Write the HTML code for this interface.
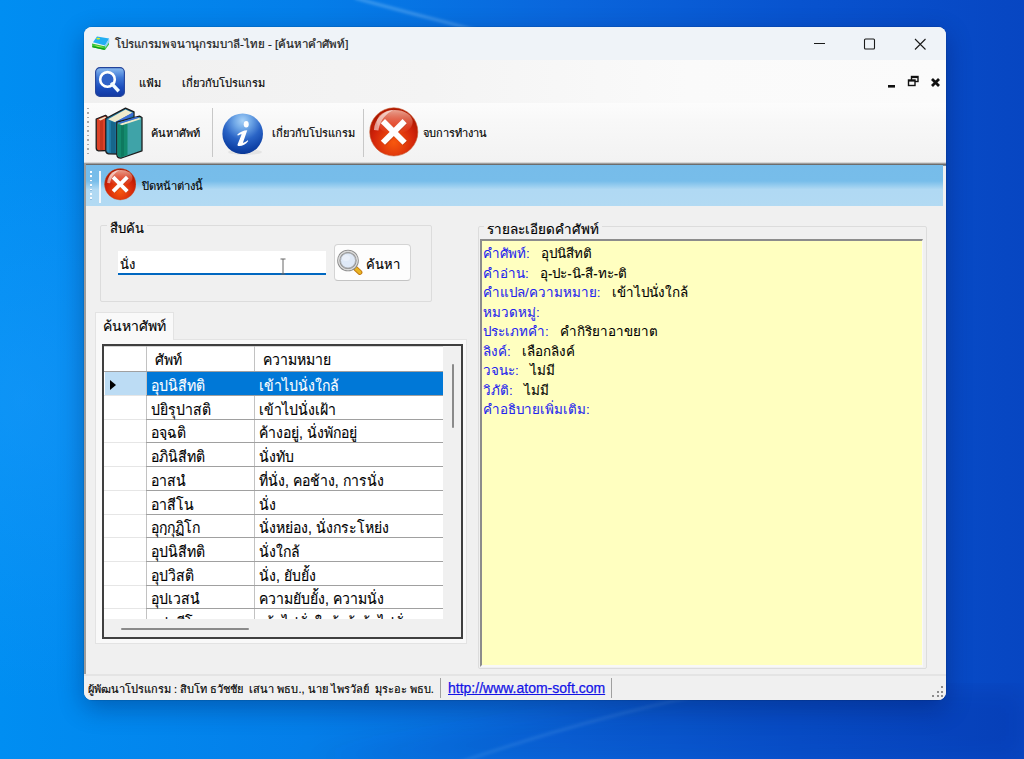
<!DOCTYPE html>
<html><head><meta charset="utf-8">
<style>
*{margin:0;padding:0;box-sizing:border-box}
html,body{width:1024px;height:759px;overflow:hidden}
body{position:relative;font-family:"Liberation Sans",sans-serif;color:#000;
 background:radial-gradient(ellipse 260px 300px at 20px 400px,rgba(40,160,255,.35),rgba(40,160,255,0)),
 linear-gradient(90deg,#008ef2 0%,#047ee9 30%,#0a66dc 55%,#0853cf 78%,#0746c2 100%);}
.a{position:absolute;white-space:nowrap}
.gt{font-size:14px;line-height:19px;transform:translateY(3.5px) scaleY(1.07);transform-origin:0 100%;-webkit-text-stroke:0.1px currentColor}
.dt{font-size:13.4px;line-height:19px;-webkit-text-stroke:0.08px currentColor}
#win{position:absolute;left:84px;top:27px;width:862px;height:673px;border-radius:8px;overflow:hidden;background:#f0f0f0;box-shadow:0 0 0 0.5px rgba(0,0,0,.15),0 8px 26px rgba(0,10,60,.32)}
</style></head><body>
<svg class="a" style="left:0;top:0" width="1024" height="759">
  <defs><filter id="bl" x="-20%" y="-20%" width="140%" height="140%"><feGaussianBlur stdDeviation="1.5"/></filter><filter id="bl2"><feGaussianBlur stdDeviation="12"/></filter></defs>
  <path d="M355,-2 C390,8 430,18 475,30" stroke="rgba(190,230,255,.35)" stroke-width="2.5" fill="none" filter="url(#bl)"/>
  <path d="M300,759 C420,740 560,715 720,690 L1024,690 L1024,759Z" fill="rgba(0,20,90,.10)" filter="url(#bl2)"/>
  <path d="M460,762 C540,735 620,712 700,695" stroke="rgba(170,220,255,.12)" stroke-width="3" fill="none" filter="url(#bl)"/>
</svg>
<div id="win">
  <!-- title bar -->
  <div class="a" style="left:0;top:0;width:862px;height:33px;background:#eff3f8"></div>
  <div class="a" style="left:31px;top:8px;font-size:11.5px;color:#1b1b1b;-webkit-text-stroke:0.2px #1b1b1b">โปรแกรมพจนานุกรมบาลี-ไทย - [ค้นหาคำศัพท์]</div>

  <!-- title icon -->
  <svg class="a" style="left:8px;top:9px" width="18" height="15" viewBox="0 0 18 15">
    <polygon points="0,7.5 12.5,10.2 17,6 17,8.5 13,14 0.3,11.2" fill="#38c43a"/>
    <polygon points="0.5,10 12.5,12.5 12.8,14 0.3,11.2" fill="#0aa018"/>
    <polygon points="1.5,9 9,10.5 12,11.5 6,11" fill="#c8f050" opacity=".8"/>
    <polygon points="1,6.3 5,0.6 17.2,2.6 13,9.6" fill="#22aef2"/>
    <polygon points="13,9.6 17.2,2.6 17.4,6 13.2,12" fill="#8fd0f8"/>
    <ellipse cx="6.2" cy="2.6" rx="1.9" ry="0.9" fill="#e4ee1c"/>
  </svg>
  <!-- caption buttons -->
  <svg class="a" style="left:720px;top:6px" width="140" height="22">
    <line x1="10" y1="10.5" x2="21" y2="10.5" stroke="#1a1a1a" stroke-width="1.1"/>
    <rect x="60.5" y="6" width="10" height="10" rx="1" fill="none" stroke="#1a1a1a" stroke-width="1.1"/>
    <path d="M111 6L121.5 16.5M121.5 6L111 16.5" stroke="#1a1a1a" stroke-width="1.1"/>
  </svg>
  <!-- menu bar -->
  <div class="a" style="left:0;top:33px;width:862px;height:43px;background:linear-gradient(90deg,#f0f0f0,#f4f4f4 40%,#fafafa 70%,#fbfbfb)"></div>
  <!-- MDI buttons -->
  <svg class="a" style="left:800px;top:46.5px" width="60" height="16">
    <rect x="4" y="11" width="7" height="2.6" fill="#111"/>
    <rect x="27.5" y="2.5" width="6.5" height="5" fill="none" stroke="#111" stroke-width="1.4"/>
    <rect x="24.5" y="6" width="6.5" height="5.5" fill="#fafafa" stroke="#111" stroke-width="1.4"/>
    <rect x="24.5" y="6" width="6.5" height="1.6" fill="#111"/>
    <rect x="27.5" y="2.5" width="6.5" height="1.6" fill="#111"/>
    <path d="M48 5L55 12M55 5L48 12" stroke="#111" stroke-width="2.8"/>
  </svg>
  <!-- search icon (menu) -->
  <svg class="a" style="left:10.5px;top:40px" width="30" height="30" viewBox="0 0 30 30">
    <defs><linearGradient id="sq" x1="0" y1="0" x2="0" y2="1"><stop offset="0" stop-color="#8cbcf0"/><stop offset=".35" stop-color="#3f78d6"/><stop offset=".7" stop-color="#1a4cbc"/><stop offset="1" stop-color="#1238a2"/></linearGradient></defs>
    <rect x="0.6" y="0.6" width="28.8" height="28.8" rx="4.5" fill="url(#sq)" stroke="#23439a" stroke-width="1.1"/>
    <circle cx="12.5" cy="12.4" r="7.3" fill="#2f62c8" stroke="#fff" stroke-width="2.6"/>
    <line x1="17.2" y1="17.2" x2="22.6" y2="23" stroke="#f0fbff" stroke-width="3.4" stroke-linecap="square"/>
  </svg>
  <div class="a" style="left:55px;top:47px;font-size:11px;-webkit-text-stroke:0.15px #000">แฟ้ม</div>
  <div class="a" style="left:98px;top:47px;font-size:11px;-webkit-text-stroke:0.15px #000">เกี่ยวกับโปรแกรม</div>
  <!-- toolbar -->
  <div class="a" style="left:0;top:76px;width:862px;height:60px;background:linear-gradient(#fcfcfc,#f8f8f8 30%,#f2f2f2)"></div>
  <div class="a" style="left:0;top:135px;width:862px;height:4px;background:linear-gradient(#f2f2f2,#b0b0b0 30%,#6c6c6c 60%,#707070 80%,#8fb8d8)"></div>
  <!-- toolbar grip -->
  <div class="a" style="left:3px;top:81px;width:2px;height:47px;background:repeating-linear-gradient(#a8a8a8 0 1.5px,transparent 1.5px 4.5px)"></div>
  <!-- books icon -->
  <svg class="a" style="left:6px;top:77px" width="60" height="58" viewBox="0 0 60 58">
    <path d="M6.2,15 L15.5,11.3 L17,12.5 L17,46.5 L8.5,46.8 Q6.2,46.5 6.2,44 Z" fill="#dc4228" stroke="#1c1c1c" stroke-width="1.3" stroke-linejoin="round"/>
    <path d="M8.5,15.5 L14.8,12.8 L16.5,13.6 L10.5,16.6 Z" fill="#efe9cc"/>
    <path d="M10,17 L13,16 L13,46.3 L10,46.4 Z" fill="#a82814" opacity=".45"/>
    <path d="M15.8,14.5 L35.5,4.2 L44,7.8 L44,40 L28,50 L18.5,49.8 Q15.8,49.3 15.8,46.5 Z" fill="#1f7aa4" stroke="#1c1c1c" stroke-width="1.3" stroke-linejoin="round"/>
    <path d="M18,15.2 L35.5,5.6 L42.5,8.8 L25,18.2 Z" fill="#efeacc"/>
    <path d="M25,18.2 L42.5,8.8 L43.3,9.6 L43.3,11.2 L27,20 Z" fill="#3d6dd8"/>
    <path d="M21,17.5 L25.5,18.6 L25.5,49.3 L21,49.3 Z" fill="#0f5676" opacity=".55"/>
    <path d="M16.6,16 L19.2,16.6 L19.2,48.3 L16.6,47.3 Z" fill="#46a8d0" opacity=".45"/>
    <path d="M26.8,18.2 L49.5,12.2 L52,13.5 L52,46.8 L31.5,54 Q27,54.5 26.8,50.5 Z" fill="#3fa3a8" stroke="#1c1c1c" stroke-width="1.3" stroke-linejoin="round"/>
    <path d="M27.5,20.5 L37.5,18 L37.5,51 L31.5,53.2 Q27.8,53.5 27.5,50.5 Z" fill="#138a6d"/>
    <path d="M31,20 L34,19.2 L34,52.2 L31,53 Z" fill="#0c6e56" opacity=".6"/>
    <path d="M29.2,20 L48.8,14 L51.2,15 L32,21.3 Z" fill="#efeacc"/>
    <path d="M27.6,19 L46.5,12.8 L49.5,13.4 L29.5,19.8 Z" fill="#3b68d4"/>
  </svg>
  <!-- info icon -->
  <div class="a" style="left:144px;top:122px;width:34px;height:6px;border-radius:50%;background:rgba(0,0,0,.06)"></div>
  <svg class="a" style="left:138.4px;top:85.8px" width="41.4" height="41.6" viewBox="0 0 100 100">
    <defs><radialGradient id="ig" cx="50%" cy="18%" r="85%"><stop offset="0" stop-color="#a8d2f8"/><stop offset=".25" stop-color="#6ea6e6"/><stop offset=".55" stop-color="#2a64c6"/><stop offset=".85" stop-color="#0f42a6"/><stop offset="1" stop-color="#0a3590"/></radialGradient></defs>
    <circle cx="50" cy="50" r="49" fill="url(#ig)"/>
    <ellipse cx="58.5" cy="27" rx="6" ry="7.8" fill="#fff"/>
    <path d="M37,52 C44,45 52,42 61,41.5 L50.5,72 C54,71 58,69 62,65.5 L63.5,67.5 C57,76 48,80.5 39.5,79.5 C37.5,79 37,77.5 37.8,75.5 L47.5,51 C44.5,51 41.5,52.5 38.5,54.5 Z" fill="#fff"/>
  </svg>
  
  <!-- big red X -->
  <svg class="a" style="left:285px;top:79.8px" width="49.6" height="49.8" viewBox="0 0 100 100">
    <defs>
      <radialGradient id="rg" cx="50%" cy="72%" r="62%"><stop offset="0" stop-color="#f7580e"/><stop offset=".35" stop-color="#e6400c"/><stop offset=".7" stop-color="#d2240a"/><stop offset="1" stop-color="#b01800"/></radialGradient>
      <linearGradient id="hl" x1="0" y1="0" x2="0" y2="1"><stop offset="0" stop-color="#ffd0c0" stop-opacity=".75"/><stop offset=".6" stop-color="#ff9a80" stop-opacity=".35"/><stop offset="1" stop-color="#ff8060" stop-opacity="0"/></linearGradient>
    </defs>
    <circle cx="50" cy="50" r="48.5" fill="url(#rg)" stroke="#c85a30" stroke-width="1.2"/>
    <ellipse cx="52" cy="30" rx="36" ry="24" fill="url(#hl)"/>
    <path d="M10,46 C11,25 28,7 50,5.5 C36,12 22,26 19,47 Z" fill="#fff" opacity=".55"/>
    <g transform="rotate(45 50 50)"><g transform="translate(1.6,0)" fill="#8a2a10" opacity=".35"><rect x="44" y="19" width="12" height="62"/><rect x="19" y="44" width="62" height="12"/></g><rect x="44" y="19" width="12" height="62" fill="#fff"/><rect x="19" y="44" width="62" height="12" fill="#fff"/></g>
  </svg>
  <div class="a" style="left:67px;top:97px;font-size:11px;-webkit-text-stroke:0.15px #000">ค้นหาศัพท์</div>
  <div class="a" style="left:128px;top:81px;width:1px;height:49px;background:#c8c8c8"></div>
  <div class="a" style="left:188px;top:97px;font-size:11px;-webkit-text-stroke:0.15px #000">เกี่ยวกับโปรแกรม</div>
  <div class="a" style="left:279px;top:82px;width:1px;height:48px;background:#c8c8c8"></div>
  <div class="a" style="left:339px;top:97px;font-size:11px;-webkit-text-stroke:0.15px #000">จบการทำงาน</div>
  <!-- MDI client border -->
  <div class="a" style="left:0;top:137px;width:1.8px;height:510px;background:#9c9c9c"></div>
  <!-- blue bar -->
  <div class="a" style="left:1.6px;top:138px;width:857.4px;height:41px;background:linear-gradient(#76bcea 0px,#77bdea 16px,#b0d9f3 24.5px,#b2daf3 100%)"></div>

  <div class="a" style="left:6px;top:143.5px;width:2px;height:31px;background:repeating-linear-gradient(#f6fbff 0 1.5px,#8fbde0 1.5px 2.4px,transparent 2.4px 4.4px)"></div>
  <div class="a" style="left:15.3px;top:144px;width:2px;height:31.5px;background:#f4f9fd"></div>
  <svg class="a" style="left:20.1px;top:141px" width="32.4" height="32.5" viewBox="0 0 100 100">
    <circle cx="50" cy="50" r="48.5" fill="url(#rg)" stroke="#c85a30" stroke-width="1.2"/>
    <ellipse cx="52" cy="30" rx="36" ry="24" fill="url(#hl)"/>
    <path d="M10,46 C11,25 28,7 50,5.5 C36,12 22,26 19,47 Z" fill="#fff" opacity=".55"/>
    <g transform="rotate(45 50 50)"><g transform="translate(1.6,0)" fill="#8a2a10" opacity=".35"><rect x="44" y="19" width="12" height="62"/><rect x="19" y="44" width="62" height="12"/></g><rect x="44" y="19" width="12" height="62" fill="#fff"/><rect x="19" y="44" width="62" height="12" fill="#fff"/></g>
  </svg>
  <div class="a" style="left:57.8px;top:150px;font-size:11.2px;-webkit-text-stroke:0.12px #000">ปิดหน้าต่างนี้</div>

  <!-- group box search -->
  <div class="a" style="left:16px;top:198px;width:332px;height:77px;border:1px solid #dcdcdc;border-radius:2px"></div>
  <div class="a" style="left:23px;top:191px;padding:0 3px;background:#f0f0f0;font-size:13px;-webkit-text-stroke:0.15px #000">สืบค้น</div>
  <div class="a" style="left:34px;top:224px;width:208px;height:24px;background:#fff;border-bottom:2px solid #0067c0"></div>
  <div class="a" style="left:36px;top:227px;font-size:13px;-webkit-text-stroke:0.15px #000">นั่ง</div>
  <div class="a" style="left:250px;top:217px;width:77px;height:37px;background:#fdfdfd;border:1px solid #d4d4d4;border-bottom-color:#c4c4c4;border-radius:4px"></div>

  <svg class="a" style="left:250px;top:219px" width="30" height="30" viewBox="0 0 30 30">
    <line x1="22" y1="22.8" x2="25.8" y2="26.3" stroke="#c47a10" stroke-width="5.2" stroke-linecap="round"/>
    <line x1="22" y1="22.8" x2="25.8" y2="26.3" stroke="#e8b424" stroke-width="3.2" stroke-linecap="round"/>
    <circle cx="14" cy="14.5" r="9.3" fill="#dfe9f7" stroke="#888" stroke-width="3"/>
    <circle cx="14" cy="14.5" r="9.3" fill="none" stroke="#dadada" stroke-width="1.5"/>
    <circle cx="14" cy="14.5" r="7.5" fill="none" stroke="#9a9a9a" stroke-width=".7"/>
    <ellipse cx="12" cy="12" rx="4" ry="3" fill="#fff" opacity=".35"/>
  </svg>
  <div class="a" style="left:282px;top:227px;font-size:13px;-webkit-text-stroke:0.15px #000">ค้นหา</div>
  <!-- tab -->
  <div class="a" style="left:11px;top:312px;width:372px;height:305px;background:#f9f9f9;border:1px solid #e3e3e3"></div>
  <div class="a" style="left:11px;top:285px;width:79px;height:28px;background:#f9f9f9;border:1px solid #e3e3e3;border-bottom:none"></div>
  <div class="a" style="left:19px;top:287.5px;font-size:14px;-webkit-text-stroke:0.12px #000">ค้นหาศัพท์</div>
  <div class="a" style="left:18px;top:317px;width:361px;height:295px;border:2px solid #3f3f3f;background:#fff;overflow:hidden">
<div class="a" style="left:0;top:0;width:339px;height:25px;background:#fff;border-top:1px solid #d4d4d4"></div>
<div class="a" style="left:42px;top:0;width:1px;height:273px;background:#c2c2c2"></div>
<div class="a" style="left:150px;top:0;width:1px;height:273px;background:#c2c2c2"></div>
<div class="a" style="left:0;top:25px;width:339px;height:1px;background:#a0a0a0"></div>
<div class="a gt" style="left:51px;top:2px">ศัพท์</div>
<div class="a gt" style="left:159px;top:2px">ความหมาย</div>
<div class="a" style="left:1px;top:26.0px;width:41px;height:23px;background:#bcdcf4"></div>
<div class="a" style="left:43px;top:26.0px;width:296px;height:23px;background:#0078d7"></div>
<svg class="a" style="left:6px;top:34.0px" width="7" height="10"><path d="M0 0L6 5L0 10Z" fill="#000"/></svg>
<div class="a" style="left:0;top:49.0px;width:42px;height:1px;background:#e6e6e6"></div>
<div class="a" style="left:42px;top:49.0px;width:297px;height:1px;background:#a0a0a0"></div>
<div class="a gt" style="left:47px;top:28.0px;color:#fff">อุปนิสีทติ</div>
<div class="a gt" style="left:155px;top:28.0px;color:#fff">เข้าไปนั่งใกล้</div>
<div class="a" style="left:0;top:72.7px;width:42px;height:1px;background:#e6e6e6"></div>
<div class="a" style="left:42px;top:72.7px;width:297px;height:1px;background:#a0a0a0"></div>
<div class="a gt" style="left:47px;top:51.7px;color:#000">ปยิรุปาสติ</div>
<div class="a gt" style="left:155px;top:51.7px;color:#000">เข้าไปนั่งเฝ้า</div>
<div class="a" style="left:0;top:96.4px;width:42px;height:1px;background:#e6e6e6"></div>
<div class="a" style="left:42px;top:96.4px;width:297px;height:1px;background:#a0a0a0"></div>
<div class="a gt" style="left:47px;top:75.4px;color:#000">อจฺฉติ</div>
<div class="a gt" style="left:155px;top:75.4px;color:#000">ค้างอยู่, นั่งพักอยู่</div>
<div class="a" style="left:0;top:120.1px;width:42px;height:1px;background:#e6e6e6"></div>
<div class="a" style="left:42px;top:120.1px;width:297px;height:1px;background:#a0a0a0"></div>
<div class="a gt" style="left:47px;top:99.1px;color:#000">อภินิสีทติ</div>
<div class="a gt" style="left:155px;top:99.1px;color:#000">นั่งทับ</div>
<div class="a" style="left:0;top:143.8px;width:42px;height:1px;background:#e6e6e6"></div>
<div class="a" style="left:42px;top:143.8px;width:297px;height:1px;background:#a0a0a0"></div>
<div class="a gt" style="left:47px;top:122.8px;color:#000">อาสนํ</div>
<div class="a gt" style="left:155px;top:122.8px;color:#000">ที่นั่ง, คอช้าง, การนั่ง</div>
<div class="a" style="left:0;top:167.5px;width:42px;height:1px;background:#e6e6e6"></div>
<div class="a" style="left:42px;top:167.5px;width:297px;height:1px;background:#a0a0a0"></div>
<div class="a gt" style="left:47px;top:146.5px;color:#000">อาสีโน</div>
<div class="a gt" style="left:155px;top:146.5px;color:#000">นั่ง</div>
<div class="a" style="left:0;top:191.2px;width:42px;height:1px;background:#e6e6e6"></div>
<div class="a" style="left:42px;top:191.2px;width:297px;height:1px;background:#a0a0a0"></div>
<div class="a gt" style="left:47px;top:170.2px;color:#000">อุกฺกุฏิโก</div>
<div class="a gt" style="left:155px;top:170.2px;color:#000">นั่งหย่อง, นั่งกระโหย่ง</div>
<div class="a" style="left:0;top:214.9px;width:42px;height:1px;background:#e6e6e6"></div>
<div class="a" style="left:42px;top:214.9px;width:297px;height:1px;background:#a0a0a0"></div>
<div class="a gt" style="left:47px;top:193.9px;color:#000">อุปนิสีทติ</div>
<div class="a gt" style="left:155px;top:193.9px;color:#000">นั่งใกล้</div>
<div class="a" style="left:0;top:238.6px;width:42px;height:1px;background:#e6e6e6"></div>
<div class="a" style="left:42px;top:238.6px;width:297px;height:1px;background:#a0a0a0"></div>
<div class="a gt" style="left:47px;top:217.6px;color:#000">อุปวิสติ</div>
<div class="a gt" style="left:155px;top:217.6px;color:#000">นั่ง, ยับยั้ง</div>
<div class="a" style="left:0;top:262.3px;width:42px;height:1px;background:#e6e6e6"></div>
<div class="a" style="left:42px;top:262.3px;width:297px;height:1px;background:#a0a0a0"></div>
<div class="a gt" style="left:47px;top:241.3px;color:#000">อุปเวสนํ</div>
<div class="a gt" style="left:155px;top:241.3px;color:#000">ความยับยั้ง, ความนั่ง</div>
<div class="a" style="left:0;top:286.0px;width:42px;height:1px;background:#e6e6e6"></div>
<div class="a" style="left:42px;top:286.0px;width:297px;height:1px;background:#a0a0a0"></div>
<div class="a gt" style="left:47px;top:265.0px;color:#000">อุปาสีโน</div>
<div class="a gt" style="left:155px;top:265.0px;color:#000">เข้าไปนั่งใกล้, ผู้เข้าไปนั่ง</div>
<div class="a" style="left:0;top:273px;width:359px;height:19px;background:#f0f0f0"></div>
<div class="a" style="left:17px;top:282px;width:128px;height:2px;background:#8a8a8a;border-radius:1px"></div>
<div class="a" style="left:339px;top:0;width:20px;height:273px;background:#f0f0f0"></div>
<div class="a" style="left:348px;top:18px;width:2px;height:64px;background:#8a8a8a;border-radius:1px"></div>
</div>
  <!-- details group -->
  <div class="a" style="left:394px;top:199px;width:449px;height:443px;border:1px solid #dcdcdc;border-radius:2px"></div>
  <div class="a" style="left:400px;top:191px;padding:0 3px;background:#f0f0f0;font-size:13.5px;-webkit-text-stroke:0.15px #000">รายละเอียดคำศัพท์</div>
  <div class="a" style="left:396px;top:212px;width:443px;height:428px;background:#ffffc0;border-style:solid;border-width:2px 1px 2px 2px;border-color:#8c8c8c #f8f8f8 #f8f8f8 #8c8c8c;overflow:hidden">
  <div class="a dt" style="left:1px;top:3.0px"><span style="color:#2424ee">คำศัพท์:</span>&nbsp;&nbsp; อุปนิสีทติ</div><div class="a dt" style="left:1px;top:22.5px"><span style="color:#2424ee">คำอ่าน:</span>&nbsp;&nbsp; อุ-ปะ-นิ-สี-ทะ-ติ</div><div class="a dt" style="left:1px;top:42.0px"><span style="color:#2424ee">คำแปล/ความหมาย:</span>&nbsp;&nbsp; เข้าไปนั่งใกล้</div><div class="a dt" style="left:1px;top:61.5px"><span style="color:#2424ee">หมวดหมู่:</span>&nbsp;&nbsp; </div><div class="a dt" style="left:1px;top:81.0px"><span style="color:#2424ee">ประเภทคำ:</span>&nbsp;&nbsp; คำกิริยาอาขยาต</div><div class="a dt" style="left:1px;top:100.5px"><span style="color:#2424ee">ลิงค์:</span>&nbsp;&nbsp; เลือกลิงค์</div><div class="a dt" style="left:1px;top:120.0px"><span style="color:#2424ee">วจนะ:</span>&nbsp;&nbsp; ไม่มี</div><div class="a dt" style="left:1px;top:139.5px"><span style="color:#2424ee">วิภัติ:</span>&nbsp;&nbsp; ไม่มี</div><div class="a dt" style="left:1px;top:159.0px"><span style="color:#2424ee">คำอธิบายเพิ่มเติม:</span>&nbsp;&nbsp; </div>
  </div>

  <!-- status bar -->
  <div class="a" style="left:0;top:647px;width:862px;height:26px;background:#f0f0f0;border-top:2px solid #e4e4e4"></div>
  <div class="a" style="left:4px;top:653px;font-size:11px;-webkit-text-stroke:0.15px #000">ผู้พัฒนาโปรแกรม : สิบโท ธวัชชัย&nbsp; เสนา พธบ., นาย ไพรวัลย์&nbsp; มุระอะ พธบ.</div>
  <div class="a" style="left:356px;top:651px;width:1px;height:20px;background:#a0a0a0"></div>
  <div class="a" style="left:364px;top:653px;font-size:14px;color:#1414e6;text-decoration:underline;-webkit-text-stroke:0.25px #1414e6">http://www.atom-soft.com</div>
  <div class="a" style="left:527px;top:651px;width:1px;height:20px;background:#a0a0a0"></div>
  <svg class="a" style="left:846px;top:657px" width="14" height="14">
    <g fill="#8c8c8c"><rect x="11" y="2" width="2" height="2"/><rect x="7" y="7" width="2" height="2"/><rect x="11" y="7" width="2" height="2"/><rect x="2" y="11" width="2" height="2"/><rect x="7" y="11" width="2" height="2"/><rect x="11" y="11" width="2" height="2"/></g>
  </svg>
  <svg class="a" style="left:196px;top:231px" width="6" height="18"><path d="M0.5 1H5.5M3 1V16M0.5 16H5.5" stroke="#666" stroke-width="1" fill="none"/></svg>
</div>
</body></html>
